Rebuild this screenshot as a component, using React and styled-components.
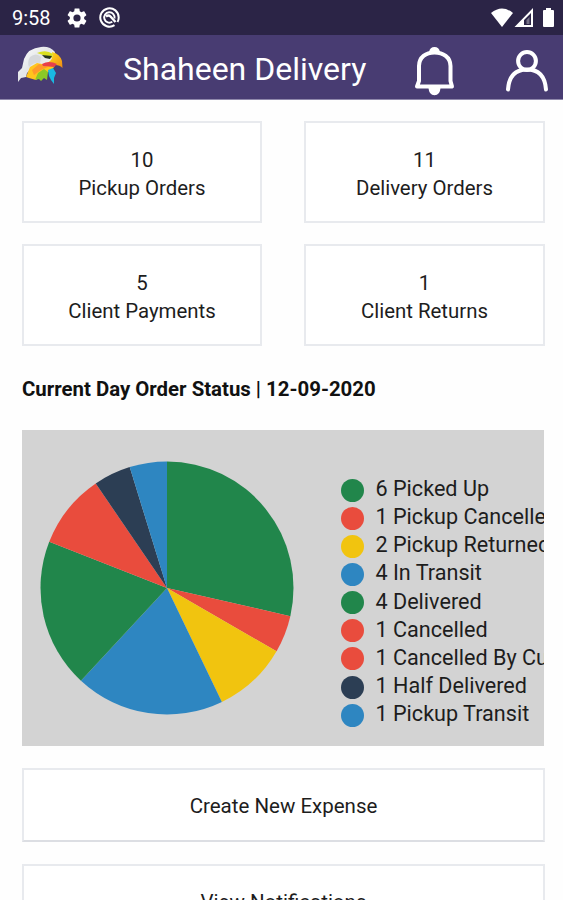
import React from "react";
import styled, { createGlobalStyle } from "styled-components";

const GlobalStyle = createGlobalStyle`
  * { box-sizing: border-box; }
  html, body { margin: 0; padding: 0; background: #fefefe; }
  body { font-family: Roboto, "Liberation Sans", sans-serif; color: #1d1d1d; overflow: hidden; }
`;

const Screen = styled.div`
  width: 563px;
  height: 900px;
  overflow: hidden;
  display: flex;
  flex-direction: column;
`;

const StatusBar = styled.div`
  flex: none;
  height: 35px;
  background: #2b2446;
  color: #fff;
  display: flex;
  align-items: center;
  padding-left: 12px;
`;

const Clock = styled.span`
  width: 55px;
  font-size: 20px;
  line-height: 35px;
  padding-top: 2px;
`;

const Glyph = styled.svg`
  display: block;
  flex: none;
  margin-left: ${(p) => p.$gap || 0}px;
`;

const SystemIcons = styled.div`
  display: flex;
  margin-left: auto;
`;

const AppBar = styled.header`
  flex: none;
  height: 65px;
  background: #483c72;
  border-bottom: 1px solid #8f88ab;
  color: #fff;
  display: flex;
  align-items: center;
`;

const Title = styled.h1`
  margin: 0 0 0 58px;
  width: 290px;
  padding-top: 3px;
  font-size: 32px;
  font-weight: 400;
  line-height: 40px;
  white-space: nowrap;
`;

const Content = styled.main`
  padding: 21px 18px 0 22px;
`;

const StatGrid = styled.section`
  display: grid;
  grid-template-columns: 240px 241px;
  grid-auto-rows: 102px;
  column-gap: 42px;
  row-gap: 21px;
`;

const Card = styled.div`
  display: flex;
  flex-direction: column;
  align-items: center;
  justify-content: center;
  background: #fff;
  border: 2px solid #e8eaee;
  font-size: 20.4px;
  line-height: 28px;
  padding-top: 3px;
`;

const Heading = styled.h2`
  margin: 29px 0 26px;
  font-size: 20.4px;
  line-height: 29px;
  font-weight: 700;
  color: #111;
  white-space: nowrap;
`;

const ChartPanel = styled.section`
  display: flex;
  width: 521.5px;
  height: 316px;
  overflow: hidden;
  background: #d3d3d3;
`;

const Legend = styled.ul`
  list-style: none;
  margin: 45px 0 0 25px;
  padding: 0;
`;

const LegendItem = styled.li`
  display: flex;
  align-items: center;
  gap: 11.5px;
  height: 28.15px;
  font-size: 21.6px;
  line-height: 28px;
  white-space: nowrap;
`;

const Dot = styled.span`
  flex: none;
  width: 23px;
  height: 23px;
  margin-top: 2px;
  border-radius: 50%;
  background: ${(p) => p.$color};
`;

const ActionButton = styled.button`
  display: block;
  width: 523px;
  height: 74px;
  margin: 22px 0 21px;
  padding: 1px 0 0;
  background: #fff;
  border: 2px solid #e8eaee;
  border-bottom-color: #dcdee3;
  font-family: inherit;
  font-size: 20.5px;
  color: #1d1d1d;
`;

const GREEN = "#21864b";
const RED = "#e94c3d";
const YELLOW = "#f1c40f";
const BLUE = "#2e86c1";
const NAVY = "#2c3e54";

const stats = [
  [10, "Pickup Orders"],
  [11, "Delivery Orders"],
  [5, "Client Payments"],
  [1, "Client Returns"],
];

const statuses = [
  [6, "Picked Up", GREEN],
  [1, "Pickup Cancelled", RED],
  [2, "Pickup Returned", YELLOW],
  [4, "In Transit", BLUE],
  [4, "Delivered", GREEN],
  [1, "Cancelled", RED],
  [1, "Cancelled By Customer", RED],
  [1, "Half Delivered", NAVY],
  [1, "Pickup Transit", BLUE],
];

// Neighbouring statuses of one colour are drawn as a single slice, so no seam shows.
const slices = statuses.reduce((list, [n, , color]) => {
  const last = list[list.length - 1];
  if (last && last.color === color) last.value += n;
  else list.push({ value: n, color });
  return list;
}, []);

function Pie() {
  const total = slices.reduce((sum, s) => sum + s.value, 0);
  const cx = 145, cy = 158, r = 126.5;
  const point = (v) => {
    const a = (v / total) * Math.PI * 2;
    return `${cx + r * Math.sin(a)} ${cy - r * Math.cos(a)}`;
  };
  let start = 0;
  return (
    <Glyph width="294" height="316">
      {slices.map(({ value, color }, i) => {
        const from = start;
        start += value;
        return (
          <path key={i} fill={color} d={`M${cx} ${cy}L${point(from)}A${r} ${r} 0 0 1 ${point(start)}Z`} />
        );
      })}
    </Glyph>
  );
}

function Eagle() {
  return (
    <Glyph $gap={17} width="48" height="42" viewBox="17 43 48 42">
      <defs>
        <linearGradient id="head" x1="0" y1="0" x2="1" y2="1">
          <stop offset="0" stopColor="#fff" />
          <stop offset="0.45" stopColor="#e4e6e8" />
          <stop offset="1" stopColor="#fff" />
        </linearGradient>
        <linearGradient id="beak" x1="0" y1="0" x2="1" y2="1">
          <stop offset="0" stopColor="#ffe51c" />
          <stop offset="1" stopColor="#f08a12" />
        </linearGradient>
      </defs>
      <path fill="url(#head)" d="M18 79L18 69L22 65L24 56Q28 45 41 44Q50 43 55 49L53 58L45 62L36 61L27 70L26 74L21 75Z" />
      <path fill="#d6d8db" d="M30 54Q36 49 41 54L40 60Q34 59 29 64Q27 59 30 54Z" />
      <path fill="#ffc51d" d="M26 74L30 64L37 60L47 62L56 61L52 67L42 72L36 77L29 75Z" />
      <path fill="#ff9a2a" d="M32 67L39 61L48 64L41 67L34 72Z" />
      <path fill="url(#beak)" d="M52 49Q60 51 62 58L62.500 65Q60 62 55 62L47 60Q54 57 52 49Z" />
      <path fill="#d9df1e" d="M37 50Q46 46 53 51L52 55L43 52Z" />
      <path fill="#24331d" d="M42 52L52 53L50 56L45 55Z" />
      <path fill="#e83f4b" d="M42 61Q49 57 57 61L54 64L43 63Z" />
      <path fill="#8bc926" d="M38 70L44 66L48 69L47 77L44 75L41 78L39 76L35 77Z" />
      <path fill="#19b9e2" d="M48 67L53 65L56 70L54 75L54 81L51 77L49 73Z" />
    </Glyph>
  );
}

export default function App() {
  return (
    <>
      <GlobalStyle />
      <Screen>
        <StatusBar>
          <Clock>9:58</Clock>
          <Glyph width="20" height="20" viewBox="2 2 20 20">
            <path fill="#fff" d="M19.14 12.94c.04-.3.06-.61.06-.94s-.02-.64-.07-.94l2.03-1.58c.18-.14.23-.41.12-.61l-1.92-3.32c-.12-.22-.37-.29-.59-.22l-2.39.96c-.5-.38-1.03-.7-1.62-.94l-.36-2.54c-.04-.24-.24-.41-.48-.41h-3.84c-.24 0-.43.17-.47.41l-.36 2.54c-.59.24-1.13.57-1.62.94l-2.39-.96c-.22-.08-.47 0-.59.22L2.74 8.87c-.12.21-.08.47.12.61l2.03 1.58c-.05.3-.09.63-.09.94s.02.64.07.94l-2.03 1.58c-.18.14-.23.41-.12.61l1.92 3.32c.12.22.37.29.59.22l2.39-.96c.5.38 1.03.7 1.62.94l.36 2.54c.05.24.24.41.48.41h3.84c.24 0 .44-.17.47-.41l.36-2.54c.59-.24 1.13-.56 1.62-.94l2.39.96c.22.08.47 0 .59-.22l1.92-3.32c.12-.22.07-.47-.12-.61l-2.01-1.58zM12 15.6A3.6 3.6 0 1 1 12 8.4a3.6 3.6 0 0 1 0 7.2z" />
          </Glyph>
          <Glyph $gap={12} width="21" height="21" viewBox="0 0 21 21" fill="none" stroke="#fff">
            <path strokeWidth="2" d="M15.500 18.200A9.200 9.200 0 1 1 19.700 10.500Q19.700 13 18.500 15" />
            <path strokeWidth="1.900" d="M13.300 14.800A5.200 5.200 0 1 1 15.500 11.500" />
            <path strokeWidth="2.400" d="M7 9.500Q9.500 7.500 11.500 9.500L16.500 15" />
          </Glyph>
          <SystemIcons>
            <Glyph width="73" height="35" viewBox="490 0 73 35">
              <path fill="#fff" d="M491 13Q502 4 513 13L502 27Z" />
              <path fill="#fff" fillRule="evenodd" d="M533 8V27H514.500ZM531 13L524 20V25H531Z" />
              <path fill="#fff" opacity="0.35" d="M526.500 20L529.500 17V24H526.500Z" />
              <path fill="#fff" d="M543 11Q543 10 544 10H546V8H551V10H553Q554 10 554 11V26Q554 27 553 27H544Q543 27 543 26Z" />
            </Glyph>
          </SystemIcons>
        </StatusBar>
        <AppBar>
          <Eagle />
          <Title>Shaheen Delivery</Title>
          <Glyph width="150" height="64" viewBox="413 35 150 64" fill="none" stroke="#fff" strokeWidth="4">
            <path strokeLinejoin="round" d="M419 81V66C419 57 426 52.500 434.500 52.500S450.500 57 450.500 66V81L452 86.500H417Z" />
            <path fill="#fff" stroke="none" d="M429 52Q430 47 434.500 47T440 52ZM428.500 88H440.500Q440 95.300 434.500 95.300T428.500 88Z" />
            <circle cx="527" cy="61" r="8.900" />
            <path strokeLinecap="round" d="M508 89.500C509 76 516 69.500 527 69.500S545 76 546 89.500" />
          </Glyph>
        </AppBar>
        <Content>
          <StatGrid>
            {stats.map(([n, label]) => (
              <Card key={label}>
                <span>{n}</span>
                <span>{label}</span>
              </Card>
            ))}
          </StatGrid>
          <Heading>Current Day Order Status | 12-09-2020</Heading>
          <ChartPanel>
            <Pie />
            <Legend>
              {statuses.map(([n, label, color]) => (
                <LegendItem key={label}>
                  <Dot $color={color} />
                  <span>{n} {label}</span>
                </LegendItem>
              ))}
            </Legend>
          </ChartPanel>
          <ActionButton>Create New Expense</ActionButton>
          <ActionButton>View Notifications</ActionButton>
        </Content>
      </Screen>
    </>
  );
}
